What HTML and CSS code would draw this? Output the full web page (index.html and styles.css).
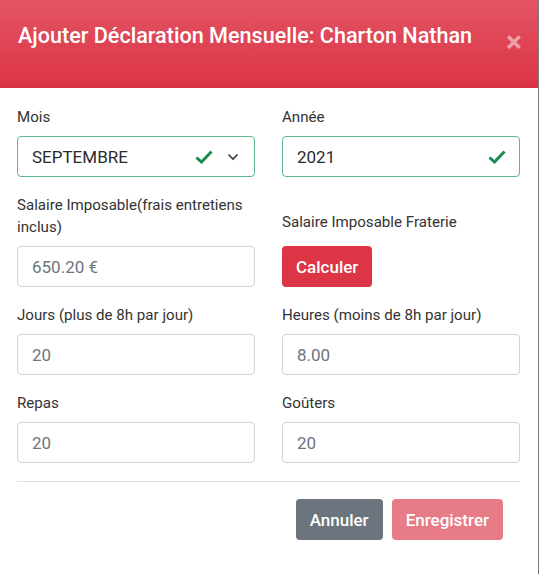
FILE: index.html
```html
<!DOCTYPE html>
<html lang="fr">
<head>
<meta charset="utf-8">
<link rel="stylesheet" href="styles.css">
</head>
<body>
<div class="modal">
  <div class="modal-header">
    <h1 class="title">Ajouter Déclaration Mensuelle: Charton Nathan</h1>
    <span class="close">&times;</span>
  </div>
  <div class="modal-body">
    <div class="grid">
      <div class="field">
        <label class="label">Mois</label>
        <div class="control valid">
          <span class="value dark">SEPTEMBRE</span>
          <svg class="check" width="18" height="14" viewBox="0 0 18 14"><path d="M1.5 7.5 L6.5 12 L16.5 1.5" fill="none" stroke="#1f8a50" stroke-width="3"/></svg>
          <svg class="chev" width="12" height="8" viewBox="0 0 12 8"><path d="M1.5 1.5 L6 6 L10.5 1.5" fill="none" stroke="#343a40" stroke-width="1.6"/></svg>
        </div>
      </div>
      <div class="field">
        <label class="label">Année</label>
        <div class="control valid">
          <span class="value dark">2021</span>
          <svg class="check last" width="18" height="14" viewBox="0 0 18 14"><path d="M1.5 7.5 L6.5 12 L16.5 1.5" fill="none" stroke="#1f8a50" stroke-width="3"/></svg>
        </div>
      </div>
      <div class="field">
        <label class="label">Salaire Imposable(frais entretiens inclus)</label>
        <div class="control"><span class="value">650.20 €</span></div>
      </div>
      <div class="field end">
        <label class="label raised">Salaire Imposable Fraterie</label>
        <div><button class="btn btn-danger">Calculer</button></div>
      </div>
      <div class="field">
        <label class="label">Jours (plus de 8h par jour)</label>
        <div class="control"><span class="value">20</span></div>
      </div>
      <div class="field">
        <label class="label">Heures (moins de 8h par jour)</label>
        <div class="control"><span class="value">8.00</span></div>
      </div>
      <div class="field">
        <label class="label">Repas</label>
        <div class="control"><span class="value">20</span></div>
      </div>
      <div class="field">
        <label class="label">Goûters</label>
        <div class="control"><span class="value">20</span></div>
      </div>
    </div>
    <hr class="sep">
    <div class="footer">
      <button class="btn btn-secondary">Annuler</button>
      <button class="btn btn-disabled">Enregistrer</button>
    </div>
  </div>
</div>
</body>
</html>
```
FILE: styles.css
```css
* { box-sizing: border-box; }
html, body { margin: 0; padding: 0; background: #fff; }
body { font-family: Roboto, "Liberation Sans", Arial, sans-serif; color: #333; }

.modal {
  width: 539px;
  height: 574px;
  border-right: 1px solid #7a7a7a;
  background: #fff;
}

.modal-header {
  height: 88px;
  background: linear-gradient(#e25464, #db3446);
  border-bottom: 1px solid #d4303f;
  display: flex;
  align-items: flex-start;
  justify-content: space-between;
  padding: 0 16px 0 18px;
}
.title {
  margin: 22px 0 0;
  font-size: 21.6px;
  font-weight: 500;
  color: #fff;
  line-height: 28px;
  letter-spacing: 0;
}
.close {
  margin-top: 27px;
  font-size: 30px;
  line-height: 30px;
  font-weight: 700;
  color: rgba(255,255,255,0.5);
}

.modal-body { padding: 18px 18px 0 17px; }

.grid {
  display: grid;
  grid-template-columns: 238px 238px;
  column-gap: 27px;
  row-gap: 17px;
}
.field { display: flex; flex-direction: column; }
.field.end { justify-content: flex-end; }

.label {
  font-size: 15.1px;
  line-height: 22px;
  color: #333;
  margin-bottom: 8px;
}
.label.raised { margin-bottom: 13px; }

.control {
  height: 41px;
  border: 1px solid #ced4da;
  border-radius: 4px;
  display: flex;
  align-items: center;
  padding: 0 13px 0 14px;
}
.control.valid { border-color: #5fb88a; }
.value {
  flex: 1;
  font-size: 17px;
  color: #6c757d;
}
.value.dark { color: #2b2b2b; }
.check { margin-right: 14px; }
.check.last { margin-right: 0; }
.chev { margin-right: 2px; }

.btn {
  font-family: inherit;
  font-size: 17px;
  font-weight: 500;
  color: #fff;
  border: none;
  border-radius: 4px;
  height: 41px;
  padding: 0 14px;
}
.btn-danger { background: #dc3545; }
.btn-secondary { background: #6c757d; }
.btn-disabled { background: #e77b86; }

.sep {
  margin: 18px 0 0;
  border: 0;
  border-top: 1px solid #dee2e6;
}
.footer {
  display: flex;
  justify-content: flex-end;
  gap: 9px;
  padding: 17px 17px 0 0;
}
```
